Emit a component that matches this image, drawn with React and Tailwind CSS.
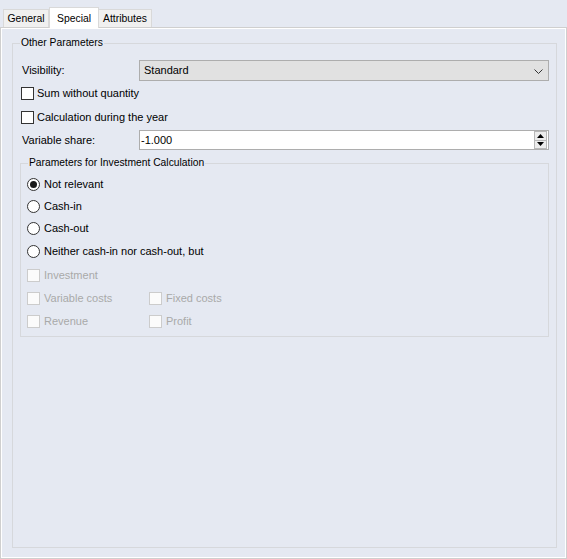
import React from "react";

function Check({ label, disabled, gap }) {
  return (
    <div className={"flex items-center " + (gap ? "gap-[3px]" : "gap-[4px]")}>
      <span
        className={
          "block w-[13px] h-[13px] border " +
          (disabled ? "border-[#cccccc] bg-[#fbfbfb]" : "border-[#333333] bg-white")
        }
      />
      <span className={disabled ? "text-[#a9a9a9]" : "text-black"}>{label}</span>
    </div>
  );
}

function Radio({ label, checked }) {
  return (
    <div className="flex items-center gap-[4px]">
      <span className="flex items-center justify-center w-[13px] h-[13px] rounded-full border border-[#333333] bg-white">
        {checked && <span className="block w-[7px] h-[7px] rounded-full bg-[#1a1a1a]" />}
      </span>
      <span className="text-black">{label}</span>
    </div>
  );
}

export default function App() {
  return (
    <div className="w-[567px] h-[559px] bg-[#e5e9f2] flex flex-col font-['Liberation_Sans',Arial,sans-serif] text-[11px] leading-[13px] text-black select-none">
      {/* Tab strip */}
      <div className="h-[27px] flex items-end pl-[3px] text-[10.4px]">
        <div className="h-[18px] w-[46px] border border-b-0 border-[#d9d9d9] bg-[#f0f0f0] flex items-center justify-center">
          General
        </div>
        <div className="relative z-10 h-[21px] w-[50px] -mb-[1px] border border-b-0 border-[#d9d9d9] bg-white flex items-start justify-center pt-[4px]">
          Special
        </div>
        <div className="h-[18px] w-[53px] border border-b-0 border-l-0 border-[#d9d9d9] bg-[#f0f0f0] flex items-center justify-center">
          Attributes
        </div>
      </div>

      {/* Tab page */}
      <div className="flex-1 border border-[#cfcfcf] bg-white p-px flex flex-col">
        <div className="flex-1 bg-[#e5e9f2] flex flex-col pl-[10px] pr-[8px] pt-[7px] pb-[9px]">
          <fieldset className="flex-1 border border-[#d6d8dc] pl-[8px] pr-[7px]">
            <legend className="-ml-[1px] px-[1px] text-[10.3px] leading-[14px]">Other Parameters</legend>

            <div className="mt-[10px] h-[21px] flex items-center">
              <div className="w-[118px] pl-[1px]">Visibility:</div>
              <div className="flex-1 h-[21px] border border-[#adadad] bg-[#e1e1e1] flex items-center justify-between pl-[4px] pr-[5px]">
                <span>Standard</span>
                <svg width="9" height="5" viewBox="0 0 9 5" className="mt-[1px]">
                  <path d="M0.5 0.5 L4.5 4.5 L8.5 0.5" fill="none" stroke="#333" strokeWidth="1" />
                </svg>
              </div>
            </div>

            <div className="mt-[2px] h-[20px] flex items-center">
              <Check label="Sum without quantity" gap />
            </div>
            <div className="mt-[4px] h-[20px] flex items-center">
              <Check label="Calculation during the year" gap />
            </div>

            <div className="mt-[3px] h-[20px] flex items-center">
              <div className="w-[118px] pl-[1px]">Variable share:</div>
              <div className="flex-1 h-[20px] border border-[#adadad] bg-white flex items-center pl-[1px] pr-px">
                <span className="flex-1">-1.000</span>
                <div className="flex flex-col w-[13px] h-[18px]">
                  <div className="flex-1 border border-[#b8b8b8] bg-[#ececec] flex items-center justify-center">
                    <svg width="7" height="4" viewBox="0 0 7 4">
                      <path d="M0 4 L3.5 0 L7 4 Z" fill="#000" />
                    </svg>
                  </div>
                  <div className="flex-1 border border-t-0 border-[#b8b8b8] bg-[#ececec] flex items-center justify-center">
                    <svg width="7" height="4" viewBox="0 0 7 4">
                      <path d="M0 0 L7 0 L3.5 4 Z" fill="#000" />
                    </svg>
                  </div>
                </div>
              </div>
            </div>

            <fieldset className="mt-[6px] -ml-[1px] border border-[#d6d8dc] pl-[6px] pb-[3px]">
              <legend className="ml-[1px] px-[1px] text-[10.3px] leading-[14px]">
                Parameters for Investment Calculation
              </legend>
              <div className="mt-[3px] h-[22px] flex items-center">
                <Radio label="Not relevant" checked />
              </div>
              <div className="h-[22px] flex items-center">
                <Radio label="Cash-in" />
              </div>
              <div className="h-[23px] flex items-center">
                <Radio label="Cash-out" />
              </div>
              <div className="h-[22px] flex items-center">
                <Radio label="Neither cash-in nor cash-out, but" />
              </div>
              <div className="mt-[2px] h-[23px] flex items-center">
                <Check label="Investment" disabled />
              </div>
              <div className="h-[23px] flex items-center">
                <div className="w-[122px]">
                  <Check label="Variable costs" disabled />
                </div>
                <Check label="Fixed costs" disabled />
              </div>
              <div className="h-[23px] flex items-center">
                <div className="w-[122px]">
                  <Check label="Revenue" disabled />
                </div>
                <Check label="Profit" disabled />
              </div>
            </fieldset>
          </fieldset>
        </div>
      </div>
    </div>
  );
}
